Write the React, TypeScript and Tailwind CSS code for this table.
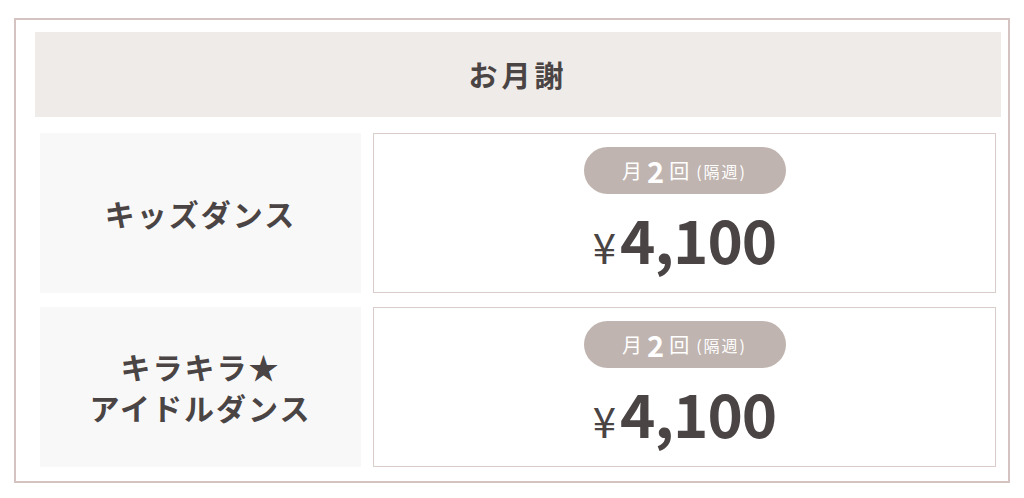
import React from 'react';

const plans = [
  { name: ['キッズダンス'], price: '4,100' },
  { name: ['キラキラ★', 'アイドルダンス'], price: '4,100' },
];

const PriceCell: React.FC<{ price: string }> = ({ price }) => (
  <div className="flex-1 border border-[#dacccb] bg-white flex flex-col items-center pt-[13px]">
    <div className="w-[202px] h-[47px] rounded-full bg-[#bfb4af] text-white flex items-center justify-center leading-none">
      <span className="text-[20px]">月</span>
      <span className="text-[29px] font-bold mx-[5px]">2</span>
      <span className="text-[20px]">回</span>
      <span className="text-[16px] ml-[7px] tracking-[2px]">(隔週)</span>
    </div>
    <div className="flex items-baseline text-[#4a4444] mt-[14px] leading-none">
      <span className="text-[42px] mr-[4px]">¥</span>
      <span className="text-[60px] font-bold tracking-[-1px]">{price}</span>
    </div>
  </div>
);

export default function App() {
  return (
    <div
      className="w-[1024px] h-[498px] bg-white pt-[18px] pl-[14px]"
      style={{ fontFamily: '"Noto Sans CJK JP", "Noto Sans", sans-serif' }}
    >
      <div className="w-[996px] h-[465px] border-2 border-[#d4c3c1] pt-[12px] pl-[19px] pr-[7px]">
        <div className="h-[85px] bg-[#efebe8] flex items-center justify-center text-[#4a4444] text-[29px] font-bold tracking-[4px]">
          お月謝
        </div>
        <div className="mt-[16px] px-[5px] flex flex-col gap-[14px]">
          {plans.map((p, i) => (
            <div key={i} className="h-[160px] flex gap-[12px]">
              <div className="w-[321px] bg-[#f8f8f8] flex flex-col items-center justify-center text-[#4a4444] text-[30px] font-bold tracking-[2px] leading-[41px]">
                {p.name.map((line) => (
                  <span key={line}>{line}</span>
                ))}
              </div>
              <PriceCell price={p.price} />
            </div>
          ))}
        </div>
      </div>
    </div>
  );
}
